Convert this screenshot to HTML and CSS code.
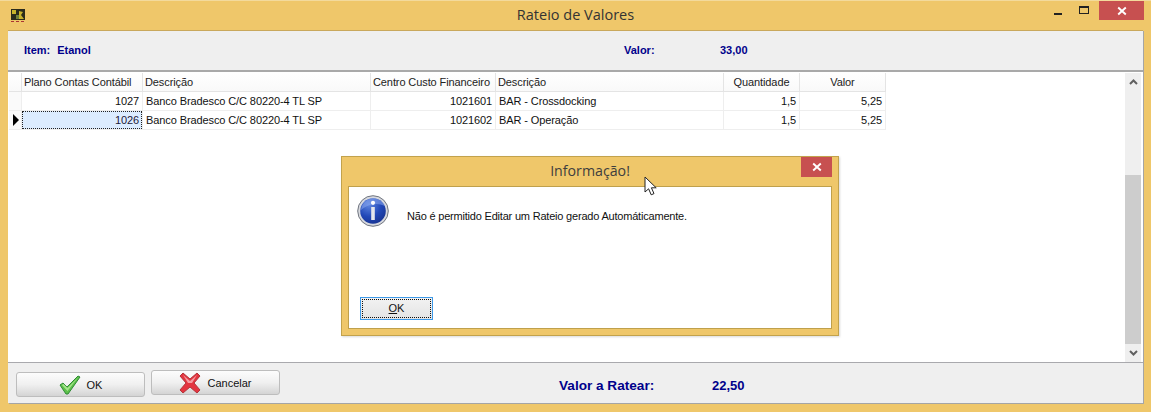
FILE: index.html
```html
<!DOCTYPE html>
<html lang="pt">
<head>
<meta charset="utf-8">
<title>Rateio de Valores</title>
<link rel="stylesheet" href="styles.css">
</head>
<body>
<div class="window">
  <header class="titlebar">
    <svg class="appicon" width="16" height="16" viewBox="0 0 16 16"><rect x="1" y="2" width="14" height="11" fill="#2b2b1c"/><path d="M2 3h4v4H2zM9 4l4 1-2 3 3 4H9z" fill="#c8b32c"/><path d="M6 8h3v4H6z" fill="#6f7f3a"/><rect x="1" y="14" width="3" height="1" fill="#a33"/><rect x="6" y="14" width="3" height="1" fill="#a33"/><rect x="11" y="14" width="3" height="1" fill="#a33"/></svg>
    <div class="title">Rateio de Valores</div>
    <div class="controls">
      <div class="ctl"><span class="min"></span></div>
      <div class="ctl"><span class="max"></span></div>
      <div class="close"><svg width="10" height="10" viewBox="0 0 10 10"><path d="M1.2 1.5l7.6 7M8.8 1.5l-7.6 7" stroke="#fff" stroke-width="1.9"/></svg></div>
    </div>
  </header>
  <div class="client">
    <section class="infobar">
      <div class="item">Item:&nbsp; Etanol</div>
      <div class="valor-label">Valor:</div>
      <div class="valor-num">33,00</div>
    </section>
    <section class="gridarea">
      <table class="grid">
        <colgroup><col class="c0"><col class="c1"><col class="c2"><col class="c3"><col class="c4"><col class="c5"><col class="c6"></colgroup>
        <thead>
          <tr><th></th><th>Plano Contas Contábil</th><th>Descrição</th><th>Centro Custo Financeiro</th><th>Descrição</th><th class="ctr">Quantidade</th><th class="ctr">Valor</th></tr>
        </thead>
        <tbody>
          <tr><td class="ind"></td><td class="num">1027</td><td>Banco Bradesco C/C 80220-4 TL SP</td><td class="num">1021601</td><td>BAR - Crossdocking</td><td class="num">1,5</td><td class="num">5,25</td></tr>
          <tr><td class="ind"><span class="arrow"></span></td><td class="num sel"><span class="focus">1026</span></td><td>Banco Bradesco C/C 80220-4 TL SP</td><td class="num">1021602</td><td>BAR - Operação</td><td class="num">1,5</td><td class="num">5,25</td></tr>
        </tbody>
      </table>
      <div class="scrollbar">
        <div class="sbtn"><svg width="9" height="6" viewBox="0 0 9 6"><path d="M1 5l3.5-3.5L8 5" fill="none" stroke="#606060" stroke-width="2"/></svg></div>
        <div class="track"></div>
        <div class="thumb"></div>
        <div class="sbtn"><svg width="9" height="6" viewBox="0 0 9 6"><path d="M1 1l3.5 3.5L8 1" fill="none" stroke="#606060" stroke-width="2"/></svg></div>
      </div>
    </section>
    <footer class="footer">
      <button class="btn btn-ok">
        <svg width="22" height="20" viewBox="0 0 22 20"><path d="M1 10l3-2 4 4L19 1l2 1L9 19h-2z" fill="#5dc04a" stroke="#2f8a35" stroke-width="1"/><path d="M3 10l1.500-1 4 4L19 2.500 8.500 16z" fill="#a5e58c"/></svg>
        <span>OK</span>
      </button>
      <button class="btn btn-cancel">
        <svg width="22" height="22" viewBox="0 0 22 22"><path d="M4 1l7 6 7-6 3 3-6 7 6 7-3 3-7-6-7 6-3-3 6-7-6-7z" fill="#e3343f" stroke="#b2353a" stroke-width="1"/><path d="M4 3l7 6 7-6-5 8H9z" fill="#f59a9f"/></svg>
        <span>Cancelar</span>
      </button>
      <div class="ratear-label">Valor a Ratear:</div>
      <div class="ratear-num">22,50</div>
    </footer>
  </div>
  <div class="dialog">
    <div class="dlg-title">Informação!</div>
    <div class="dlg-close"><svg width="10" height="10" viewBox="0 0 10 10"><path d="M1.2 1.500l7.600 7M8.800 1.500l-7.600 7" stroke="#fff" stroke-width="1.900"/></svg></div>
    <div class="dlg-body">
      <div class="dlg-msg">
        <svg class="info" width="32" height="32" viewBox="0 0 32 32">
          <defs>
            <radialGradient id="blue" cx="35%" cy="25%" r="85%"><stop offset="0" stop-color="#5f86e0"/><stop offset=".55" stop-color="#2148b8"/><stop offset="1" stop-color="#16308c"/></radialGradient>
          </defs>
          <circle cx="16" cy="16" r="15.300" fill="#d6d8de" stroke="#70757f" stroke-width="1"/>
          <circle cx="16" cy="16" r="12.800" fill="url(#blue)"/>
          <path d="M4 15a12.500 12.500 0 0 1 24-4 22 22 0 0 0-24 4z" fill="#8ba8ec" opacity=".55"/>
          <circle cx="16" cy="7.800" r="2.100" fill="#fff"/>
          <path d="M14.200 12h3.600v13h-3.600z" fill="#e4e6ec"/>
        </svg>
        <p>Não é permitido Editar um Rateio gerado Automáticamente.</p>
      </div>
      <button class="dlg-ok"><span class="dlg-focus"><u>O</u>K</span></button>
    </div>
  </div>
  <svg class="cursor" width="14" height="21" viewBox="0 0 14 21"><path d="M1 1v15l3.600-3.200 2.600 6 2.800-1.200-2.600-5.800h4.800z" fill="#fff" stroke="#222" stroke-width="1"/></svg>
</div>
</body>
</html>
```
FILE: styles.css
```css
* { box-sizing: border-box; }
html, body { margin: 0; padding: 0; }
body { width: 1151px; height: 412px; overflow: hidden; font-family: "Liberation Sans", Arial, sans-serif; font-size: 11px; color: #111; background: #efc76a; }
.window { position: relative; width: 1151px; height: 412px; display: flex; flex-direction: column; background: #efc76a; border-top: 1px solid #f3da9c; padding: 0 8px 9px; }
.titlebar { height: 29px; flex: none; display: flex; position: relative; align-items: flex-start; justify-content: center; }
.appicon { position: absolute; left: 2px; top: 6px; }
.title { font-family: "Open Sans", sans-serif; font-size: 14.500px; line-height: 20px; margin-top: 4px; color: #333; }
.controls { position: absolute; right: -1px; top: 0; display: flex; }
.ctl { width: 27px; height: 19px; display: flex; align-items: center; justify-content: center; }
.min { width: 8px; height: 2px; background: #222; margin-top: 7px; margin-right: 2px; }
.max { width: 10px; height: 8px; border: 1.5px solid #222; border-top-width: 2px; margin-top: -2px; margin-right: 3px; }
.close { width: 45px; height: 19px; background: #c75050; display: flex; align-items: center; justify-content: center; margin-left: 0; }
.client { flex: 1; display: flex; flex-direction: column; border-top: 1px solid #c9a85c; box-shadow: 1px 1px 0 #a5a5a5; background: #efefef; min-height: 0; }
.infobar { height: 39px; flex: none; display: flex; align-items: center; font-weight: 700; color: #00008b; background: #efefef; padding: 0 0 2px 16px; }
.item { width: 600px; word-spacing: .4px; }
.valor-label { width: 96px; }
.gridarea { position: relative; height: 293px; flex: none; background: #fff; border-top: 2px solid #a9a9a9; border-bottom: 1px solid #a9a9ad; padding-top: 1px; }
.grid { border-collapse: separate; border-spacing: 0; table-layout: fixed; width: 877px; margin-left: 1px; letter-spacing: -.1px; }
.c0 { width: 13px; } .c1 { width: 121px; } .c2 { width: 228px; } .c3 { width: 125px; } .c4 { width: 228px; } .c5 { width: 76px; } .c6 { width: 86px; }
.grid th { font-weight: 400; text-align: left; height: 19px; padding: 0 2px; background: linear-gradient(#fff, #f9f9f9); border-right: 1px solid #e4e4e4; border-bottom: 1px solid #e4e4e4; white-space: nowrap; color: #222; overflow: hidden; }
.grid th.ctr { text-align: center; }
.grid td { height: 19px; padding: 0 3px; border-right: 1px solid #eee; border-bottom: 1px solid #eee; white-space: nowrap; overflow: hidden; color: #111; }
.grid td.ind { padding: 0; background: #fafafa; }
.grid td.num { text-align: right; }
.grid td.sel { padding: 0; background: #dcecff; }
.focus { display: block; height: 18px; line-height: 16px; padding-right: 2px; border: 1px dotted #222; color: #1c1838; }
.arrow { display: block; width: 0; height: 0; margin-left: 4px; border-left: 6px solid #000; border-top: 6px solid transparent; border-bottom: 6px solid transparent; }
.scrollbar { position: absolute; right: 2px; top: 1px; bottom: 0; width: 16px; display: flex; flex-direction: column; background: #efefef; }
.sbtn { height: 18px; flex: none; display: flex; align-items: center; justify-content: center; }
.track { height: 84px; flex: none; }
.thumb { flex: 1; background: #cdcdcd; }
.footer { height: 40px; flex: none; position: relative; display: flex; align-items: flex-start; background: #efefef; font-weight: 700; color: #00008b; font-size: 13.600px; }
.btn { position: absolute; width: 129px; height: 25px; display: flex; align-items: center; justify-content: center; gap: 6px; border: 1px solid #bdbdbd; border-radius: 3px; background: linear-gradient(#fcfcfc 0%, #f0f0f0 50%, #d4d4d4 100%); font-family: "Liberation Sans", Arial, sans-serif; font-size: 11px; color: #111; padding: 0; }
.btn-ok { left: 8px; top: 9px; }
.btn-cancel { left: 143px; top: 7px; }
.ratear-label { margin-left: 551px; margin-top: 15px; width: 153px; line-height: 16px; }
.ratear-num { margin-top: 15px; line-height: 16px; font-size: 13px; }
.dialog { position: absolute; left: 341px; top: 155px; width: 498px; height: 180px; background: #efc76a; border: 1px solid #c2a24c; box-shadow: 1px 1px 2px rgba(0,0,0,.15); padding: 29px 6px 6px; }
.dlg-title { position: absolute; left: 0; right: 0; top: 4px; text-align: center; font-family: "Open Sans", sans-serif; font-size: 14.200px; line-height: 20px; color: #3e3e3e; }
.dlg-close { position: absolute; right: 6px; top: 0; width: 31px; height: 20px; background: #c75050; display: flex; align-items: center; justify-content: center; }
.dlg-body { height: 100%; background: #fff; border: 1px solid #bfa04c; position: relative; }
.dlg-msg { display: flex; align-items: flex-start; padding: 8px 8px; gap: 18px; }
.dlg-msg p { margin: 15px 0 0; color: #111; letter-spacing: -.2px; }
.info { flex: none; }
.dlg-ok { position: absolute; left: 11px; top: 110px; width: 73px; height: 23px; padding: 1px; border: 1px solid #3e9ae8; background: linear-gradient(#f2f2f2, #e4e4e4); font-family: "Liberation Sans", Arial, sans-serif; font-size: 11px; color: #111; }
.dlg-focus { display: block; height: 19px; line-height: 17px; border: 1px dotted #111; }
.cursor { position: absolute; left: 644px; top: 175px; }
```
